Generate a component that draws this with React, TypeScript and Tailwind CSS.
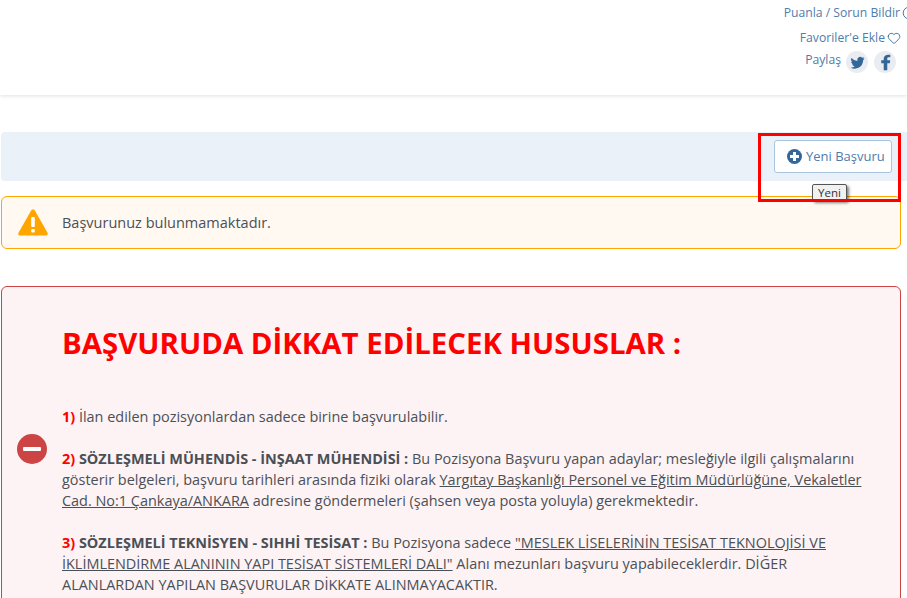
import { Heart, Info } from "lucide-react";

const FONT = "font-['Open_Sans',sans-serif]";

function TwitterIcon() {
  return (
    <svg viewBox="0 0 24 24" className="h-[15px] w-[15px] fill-[#336699]">
      <path d="M23 5.100c-.8.4-1.700.6-2.600.7.9-.6 1.600-1.400 2-2.500-.9.5-1.900.9-2.900 1.100A4.500 4.500 0 0 0 11.800 8.500c0 .4 0 .7.1 1A12.900 12.900 0 0 1 2.500 4.700a4.500 4.500 0 0 0 1.400 6.100c-.7 0-1.400-.2-2-.6v.1c0 2.200 1.500 4 3.600 4.400-.7.200-1.400.200-2 .100.6 1.800 2.300 3.100 4.200 3.100A9.100 9.100 0 0 1 1 19.800 12.800 12.800 0 0 0 8 21.800c8.300 0 12.900-6.900 12.900-12.900v-.6c.9-.6 1.600-1.400 2.100-3.200z" />
    </svg>
  );
}

function FacebookIcon() {
  return (
    <svg viewBox="0 0 24 24" className="h-[17px] w-[17px] fill-[#336699]">
      <path d="M14.500 23v-10h3.600l.6-4.200h-4.200V6.600c0-1.200.4-2 2-2h2.300V1.100C18.400 1 17.100 1 15.700 1 12.500 1 9.500 3 9.500 6.300v2.500H6v4.200h3.500v10z" />
    </svg>
  );
}

function WarningIcon() {
  return (
    <svg viewBox="0 0 30 27" className="h-[27px] w-[30px] shrink-0">
      <path d="M15 .5c.9 0 1.600.5 2 1.200l12.500 22c.8 1.400-.2 2.800-1.800 2.800H2.300C.7 26.500-.3 25.100.5 23.700l12.500-22c.4-.7 1.100-1.200 2-1.200z" fill="#ffa500" />
      <rect x="13.200" y="8" width="3.600" height="10" rx="1" fill="#fff" />
      <rect x="13.200" y="20" width="3.600" height="3.600" rx="1" fill="#fff" />
    </svg>
  );
}

export default function App() {
  return (
    <div className={`relative h-[598px] w-[907px] overflow-hidden bg-white text-[14.450px] leading-[21px] text-[#4b4f56] ${FONT}`}>
      <header className="flex h-[95px] flex-col items-end pr-[6px] pt-[3px] text-[12.200px] leading-[20px] text-[#4f7cac] shadow-[0_1px_4px_rgba(0,0,0,0.12)]">
        <div className="-mr-[6px] flex h-[20px] items-center gap-[2px] whitespace-nowrap">
          Puanla / Sorun Bildir
          <Info className="-mr-[9px] h-[14px] w-[14px] text-[#336699]" strokeWidth={1.500} />
        </div>
        <div className="mt-[5px] flex h-[20px] items-center gap-[2px] whitespace-nowrap">
          Favoriler'e Ekle
          <Heart className="h-[14px] w-[14px] text-[#336699]" strokeWidth={1.500} />
        </div>
        <div className="mr-[5px] mt-[3px] flex items-center whitespace-nowrap">
          <span className="-mt-[4px] mr-[5px]">Paylaş</span>
          <span className="mr-[6px] flex h-[22px] w-[22px] items-center justify-center rounded-full bg-[#e9edf1]">
            <TwitterIcon />
          </span>
          <span className="flex h-[22px] w-[22px] items-center justify-center rounded-full bg-[#e9edf1]">
            <FacebookIcon />
          </span>
        </div>
      </header>

      <main className="pl-px pr-[6px]">
        <div className="-mr-[6px] mt-[37px] flex h-[49px] items-center justify-end rounded-l-[4px] bg-[#ebf1f9] pr-[15px]">
          <button className="flex h-[33px] w-[118px] items-center gap-[4px] rounded-[3px] border border-[#a9c4de] bg-white pl-[12px] text-[13px] text-[#4f7cac]">
            <span className="relative flex h-[15px] w-[15px] items-center justify-center rounded-full bg-[#336699]">
              <span className="absolute h-[2.500px] w-[9px] bg-white" />
              <span className="absolute h-[9px] w-[2.500px] bg-white" />
            </span>
            Yeni Başvuru
          </button>
        </div>

        <div className="mt-[15px] flex h-[53px] items-center gap-[14px] rounded-[6px] border border-[#ffa500] bg-[#fff9f2] pl-[16px]">
          <WarningIcon />
          <span className="text-[14.500px]">Başvurunuz bulunmamaktadır.</span>
        </div>

        <div className="mt-[37px] flex h-[400px] rounded-[6px] border border-[#cc4444] bg-[#fdf3f4] pl-[15px]">
          <div className="flex w-[45px] shrink-0 items-start pt-[147px]">
            <span className="flex h-[30px] w-[30px] items-center justify-center rounded-full bg-[#cc4444]">
              <span className="h-[4px] w-[18px] rounded-[1px] bg-white" />
            </span>
          </div>
          <div className="w-[808px] pt-[36px]">
            <h1 className="text-[29.400px] font-bold leading-[41px] text-[#ff0000]">BAŞVURUDA DİKKAT EDİLECEK HUSUSLAR :</h1>
            <p className="mt-[42px]">
              <b className="text-[#ff0000]">1)</b> İlan edilen pozisyonlardan sadece birine başvurulabilir.
            </p>
            <p className="mt-[21px]">
              <b className="text-[#ff0000]">2)</b>{" "}
              <b>SÖZLEŞMELİ MÜHENDİS - İNŞAAT MÜHENDİSİ :</b> Bu Pozisyona Başvuru yapan adaylar; mesleğiyle ilgili çalışmalarını gösterir belgeleri, başvuru tarihleri arasında fiziki olarak{" "}
              <u>Yargıtay Başkanlığı Personel ve Eğitim Müdürlüğüne, Vekaletler Cad. No:1 Çankaya/ANKARA</u> adresine göndermeleri (şahsen veya posta yoluyla) gerekmektedir.
            </p>
            <p className="mt-[21px]">
              <b className="text-[#ff0000]">3)</b>{" "}
              <b>SÖZLEŞMELİ TEKNİSYEN - SIHHİ TESİSAT :</b> Bu Pozisyona sadece{" "}
              <u>"MESLEK LİSELERİNİN TESİSAT TEKNOLOJİSİ VE İKLİMLENDİRME ALANININ YAPI TESİSAT SİSTEMLERİ DALI"</u> Alanı mezunları başvuru yapabileceklerdir. DİĞER ALANLARDAN YAPILAN BAŞVURULAR DİKKATE ALINMAYACAKTIR.
            </p>
          </div>
        </div>
      </main>

      {/* tooltip ve kırmızı işaret çerçevesi */}
      <div className="absolute left-[812px] top-[184px] flex h-[17px] w-[35px] items-center justify-center rounded-[2px] border border-[#555] bg-[#f1f1f1] text-[11.500px] text-[#333] shadow-[2px_2px_3px_rgba(0,0,0,0.5)]">
        Yeni
      </div>
      <div className="absolute left-[758px] top-[133px] h-[69px] w-[143px] border-[3px] border-[#ff0000]" />
    </div>
  );
}
